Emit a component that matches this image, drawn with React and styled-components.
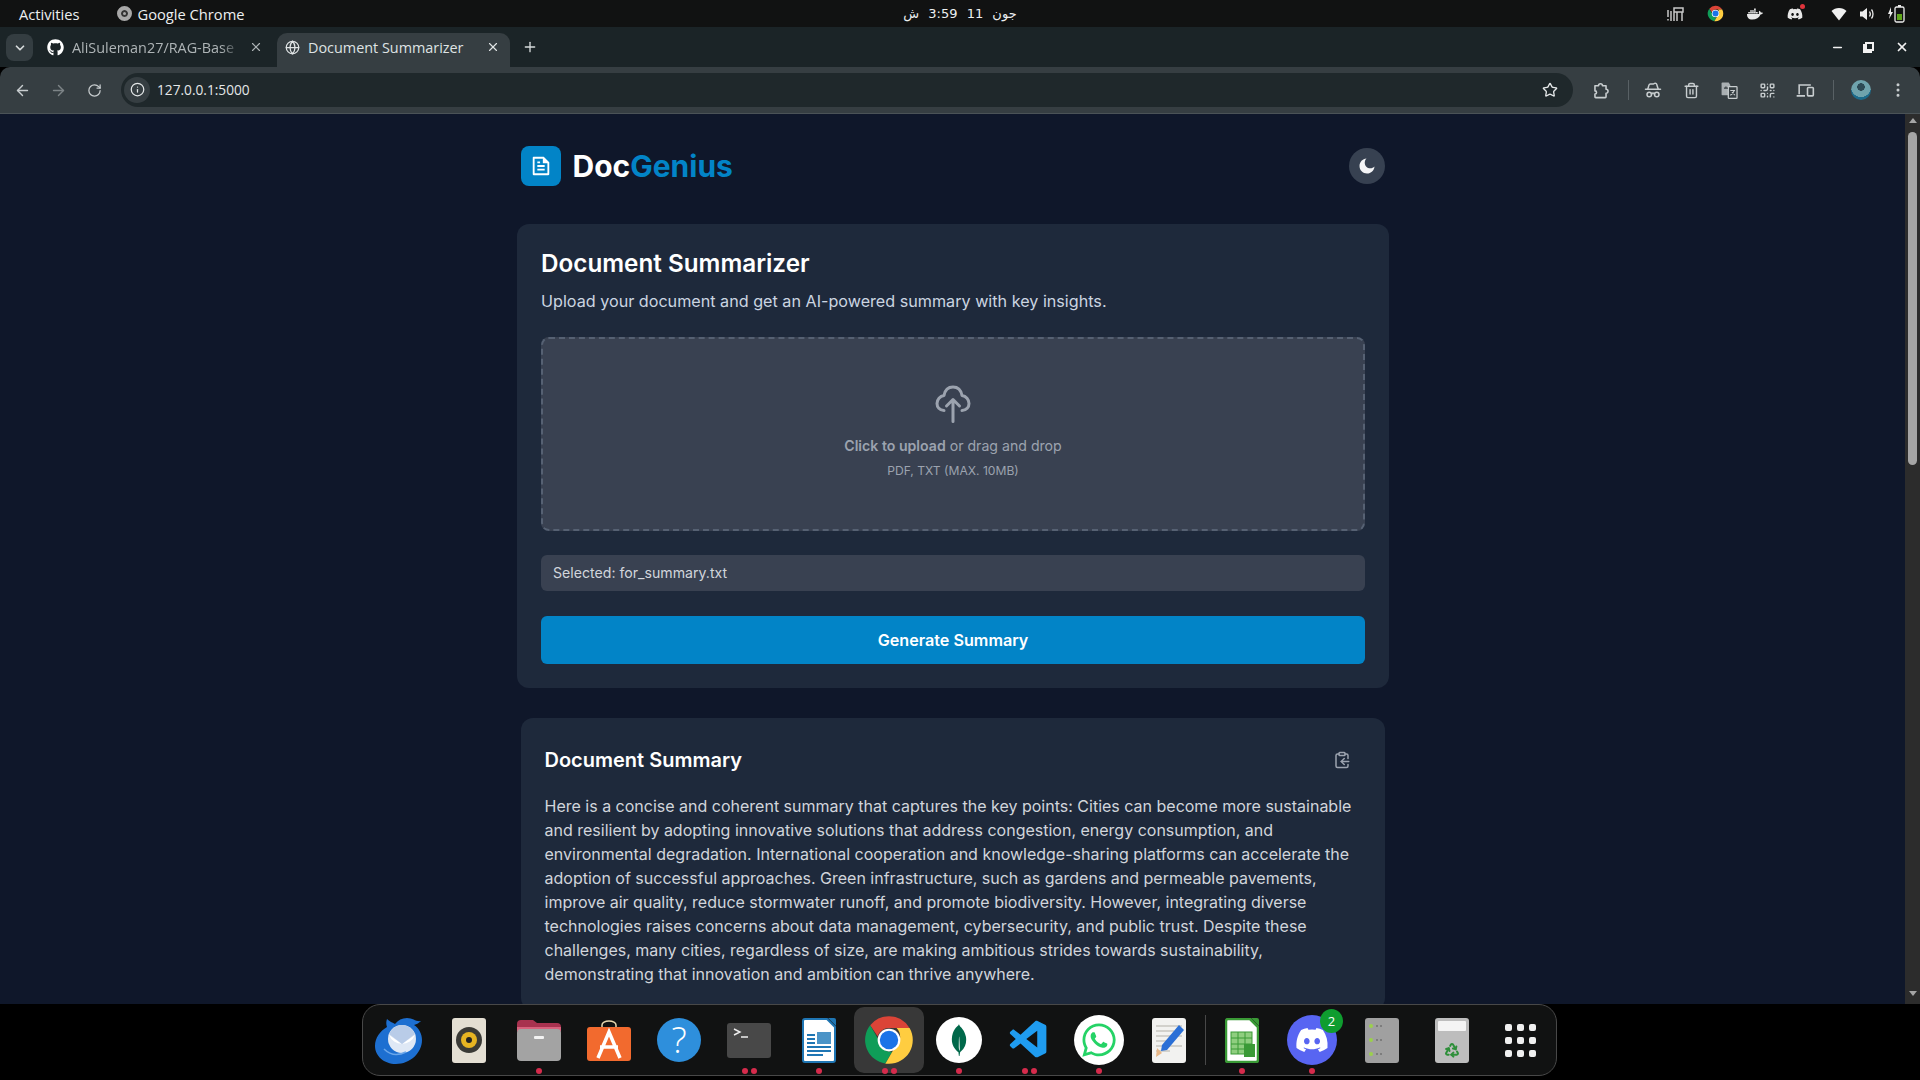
import React from 'react';
import styled, {createGlobalStyle} from 'styled-components';
import {ArrowLeft, ArrowRight, RotateCw, Info, Star, Trash2, QrCode, EllipsisVertical, ChevronDown, Plus, X, Minus, Globe, ClipboardCopy, Recycle, HatGlasses} from 'lucide-react';
import {FaGithub, FaDiscord, FaWhatsapp, FaDocker} from 'react-icons/fa';
import {SiMongodb} from 'react-icons/si';
import {VscVscode} from 'react-icons/vsc';
import {RiFileTextLine, RiMoonFill} from 'react-icons/ri';

const GlobalStyle = createGlobalStyle`
    html, body {
        margin: 0;
        padding: 0;
        height: 100%;
        overflow: hidden;
        background: #000;
    }
    * { box-sizing: border-box; }
`;

const ChromeLogo = ({size = 20}) => (
    <svg width={size} height={size} viewBox="0 0 48 48">
        <path fill="#db4437" d="M24 2a22 22 0 0 1 19 11H24a11 11 0 0 0-10.500 7.500L6.600 10.400A22 22 0 0 1 24 2z" />
        <path fill="#0f9d58" d="M6.600 10.400l9.600 16.600A9 9 0 0 0 27 34.600L20.600 45.700A22 22 0 0 1 6.600 10.400z" />
        <path fill="#ffcd40" d="M43 13a22 22 0 0 1-19 33h-3.400l9.600-16.600A11 11 0 0 0 31 13z" />
        <circle cx="24" cy="24" r="10.500" fill="#fff" />
        <circle cx="24" cy="24" r="8.500" fill="#1a73e8" />
    </svg>
);

const UploadCloud = () => (
    <svg width="36" height="38" viewBox="0 0 36 38" fill="none" stroke="currentColor" strokeWidth="3" strokeLinecap="round" strokeLinejoin="round">
        <path d="M9 25.500C4.500 25.500 2 22 2 18.500 2 14.500 5 11 9 10.500 10 5 13.500 2 18 2s8 3 9 8.500c4 .5 7 4 7 8 0 3.500-2.500 7-7 7" />
        <path d="M18 36.500V15M11.500 21l6.500-6.500 6.500 6.500" />
    </svg>
);

const ExtensionIcon = () => (
    <svg width="19" height="19" viewBox="0 0 24 24" fill="none" stroke="currentColor" strokeWidth="2" strokeLinejoin="round">
        <path d="M5 6h4.500a2.500 2.500 0 0 1 5 0H19v4.500a2.500 2.500 0 0 1 0 5V20a1 1 0 0 1-1 1H6a1 1 0 0 1-1-1v-3.500a2 2 0 0 0 0-4z" />
    </svg>
);

const TranslateIcon = () => (
    <svg width="19" height="19" viewBox="0 0 24 24">
        <path fill="#a9afb2" d="M2 3a1 1 0 0 1 1-1h8l2 3v13H3a1 1 0 0 1-1-1z" />
        <rect x="10.500" y="7" width="11" height="15" rx="1" fill="#363e42" stroke="#c8cdcf" strokeWidth="1.600" />
        <path stroke="#363e42" strokeWidth="1.500" fill="none" d="M5 9h5M7.500 7v2" />
        <path stroke="#c8cdcf" strokeWidth="1.300" fill="none" d="M13 12h6M18 12c-1 3-3 5-5 6M15 14l4 4" />
    </svg>
);

const DevicesIcon = () => (
    <svg width="20" height="20" viewBox="0 0 24 24" fill="none" stroke="currentColor" strokeWidth="1.900">
        <path d="M5 17V6h14M2 19h10" />
        <rect x="15" y="9" width="7" height="10" rx="1" />
    </svg>
);

const TrayBarsIcon = () => (
    <svg width="17" height="16" viewBox="0 0 17 16" fill="none" stroke="#c8c8c8" strokeWidth="1.500">
        <path d="M1 4v7M1 13v1.500M4 5v10M7 4v11M7 4V2h9v4H7M10 6v9M15 6v9" />
    </svg>
);

const WifiIcon = () => (
    <svg width="16" height="14" viewBox="0 0 16 14">
        <path fill="#f0f0f0" d="M8 13.500L.500 4C2.500 2 5 1 8 1s5.500 1 7.500 3z" />
    </svg>
);

const VolumeIcon = () => (
    <svg width="16" height="16" viewBox="0 0 16 16" fill="none">
        <path fill="#ececec" d="M1 5.500h2.500L8 2v12l-4.500-3.500H1z" />
        <path stroke="#ececec" strokeWidth="1.300" d="M10.500 5.500c1 1.500 1 3.500 0 5M12.500 3.500c2 2.500 2 6.500 0 9" />
    </svg>
);

const BatteryIcon = () => (
    <svg width="18" height="19" viewBox="0 0 18 19" fill="none">
        <path fill="#ececec" d="M4 3L1 10h2l-1 5 4-7H4z" />
        <rect x="8" y="3" width="9" height="15" rx="1.500" stroke="#ececec" strokeWidth="1.300" />
        <rect x="11" y="1" width="3" height="2" fill="#ececec" />
        <rect x="10" y="10" width="5" height="6" fill="#5fa61a" />
    </svg>
);

const Screen = styled.div`
    width: 1920px;
    height: 1080px;
    display: flex;
    flex-direction: column;
    overflow: hidden;
    background: #000;
`;

/* gnome top bar */
const TopBar = styled.div`
    height: 27px;
    flex: none;
    background: #111212;
    color: #eceff0;
    font: 14.700px "Open Sans", "Noto Sans", sans-serif;
    display: grid;
    grid-template-columns: 1fr auto 1fr;
    align-items: center;
    padding: 0 9px;
`;

const TopLeft = styled.div`
    display: flex;
    align-items: center;
    gap: 37px;
    padding-left: 10px;
`;

const AppName = styled.span`
    display: flex;
    align-items: center;
    gap: 6px;
`;

const AppDot = styled.span`
    width: 15px;
    height: 15px;
    border-radius: 50%;
    background: #a8a8a8;
    border: 4px solid #a8a8a8;
    box-shadow: inset 0 0 0 2px #333;
`;

const Clock = styled.div`
    font: 13px "DejaVu Sans", sans-serif;
    word-spacing: 5px;
`;

const Tray = styled.div`
    display: flex;
    justify-content: flex-end;
    align-items: center;
`;

const TraySlot = styled.span`
    width: ${p => p.$w || 40}px;
    margin-left: ${p => p.$gap || 0}px;
    display: flex;
    justify-content: center;
    align-items: center;
    color: #e8e8e8;
    position: relative;
`;

const TrayAlert = styled.i`
    position: absolute;
    top: -2px;
    left: 25px;
    width: 5px;
    height: 5px;
    border-radius: 50%;
    background: #e0343c;
`;

/* browser */
const TabStrip = styled.div`
    height: 40px;
    flex: none;
    background: #1b2427;
    display: flex;
    align-items: flex-end;
    padding-left: 6px;
`;

const TabSearch = styled.div`
    width: 27px;
    height: 27px;
    border-radius: 8px;
    margin: 0 0 6px;
    background: #343d41;
    color: #d6dadb;
    display: flex;
    align-items: center;
    justify-content: center;
`;

const Tab = styled.div`
    width: ${p => p.$w}px;
    height: 34px;
    display: flex;
    align-items: center;
    padding: 0 ${p => (p.$active ? '10px 6px 8px' : '14px 6px 14px')};
    gap: 8px;
    font: 14.400px "Open Sans", "Noto Sans", sans-serif;
    color: ${p => (p.$active ? '#dfe3e4' : '#aeb4b6')};
    background: ${p => (p.$active ? '#363e42' : 'transparent')};
    border-radius: 10px 10px 0 0;
    white-space: nowrap;
`;

const TabTitle = styled.span`
    flex: 1;
    ${p => p.$fade && 'mask-image: linear-gradient(90deg, #000 88%, transparent);'}
`;

const NewTab = styled.div`
    margin: 0 0 12px 12px;
    color: #d6dadb;
    display: flex;
`;

const WindowBtns = styled.div`
    margin-left: auto;
    display: flex;
    align-items: center;
    gap: 21px;
    padding: 0 11px 0 0;
    color: #f2f2f2;
    height: 100%;
`;

const RestoreIcon = styled.span`
    width: 9px;
    height: 9px;
    border: 2px solid #f2f2f2;
    box-shadow: -2px 2px 0 0 #f2f2f2;
    margin-top: -2px;
`;

const Toolbar = styled.div`
    height: 47px;
    flex: none;
    background: #363e42;
    border-radius: 10px 10px 0 0;
    display: flex;
    align-items: center;
    color: #c8cdcf;
    border-bottom: 1px solid #4b5357;
    padding-left: 4px;
`;

const NavBtn = styled.div`
    width: 36px;
    display: flex;
    justify-content: center;
    color: ${p => (p.$dim ? '#7d8487' : '#c8cdcf')};
    flex: none;
`;

const Omnibox = styled.div`
    width: 1452px;
    height: 34px;
    margin: 0 8px 0 9px;
    border-radius: 17px;
    background: #1f282b;
    display: flex;
    align-items: center;
    padding: 0 15px 1px 3px;
    font: 13.700px "Open Sans", "Noto Sans", sans-serif;
    color: #e4e7e8;
    flex: none;
`;

const InfoChip = styled.span`
    width: 26px;
    height: 26px;
    border-radius: 50%;
    background: #363e42;
    display: flex;
    align-items: center;
    justify-content: center;
    margin-right: 7px;
`;

const StarSlot = styled.span`
    margin-left: auto;
    display: flex;
`;

const ToolSep = styled.span`
    width: 1px;
    height: 20px;
    background: #596165;
    margin: 0 ${p => p.$right}px 0 9px;
    flex: none;
`;

const ToolIcon = styled.span`
    width: 38px;
    display: flex;
    justify-content: center;
    flex: none;
`;

const Avatar = styled.span`
    width: 20px;
    height: 20px;
    margin-left: 2px;
    border-radius: 50%;
    background: radial-gradient(circle at 50% 35%, #2d4a55 0 22%, #6fa3ad 24% 60%, #1c6b8c 62%);
`;

/* page */
const Viewport = styled.div`
    height: 890px;
    flex: none;
    display: flex;
    overflow: hidden;
`;

const Page = styled.main`
    flex: 1;
    background: #0f172a;
    font-family: Inter, sans-serif;
    overflow: hidden;
`;

const Container = styled.div`
    width: 864px;
    margin: 0 auto;
    padding-top: 32px;
`;

const Header = styled.header`
    display: flex;
    align-items: center;
    justify-content: space-between;
    height: 40px;
    margin-bottom: 38px;
`;

const Brand = styled.div`
    display: flex;
    align-items: center;
    gap: 12px;
`;

const LogoBox = styled.div`
    width: 40px;
    height: 40px;
    border-radius: 8px;
    background: #0284c7;
    color: #fff;
    display: flex;
    align-items: center;
    justify-content: center;
`;

const BrandName = styled.h1`
    margin: 0;
    font-size: 30px;
    font-weight: 700;
    line-height: 36px;
    color: #fff;
    span { color: #0284c7; }
`;

const ThemeToggle = styled.button`
    width: 36px;
    height: 36px;
    border: 0;
    border-radius: 50%;
    background: #374151;
    color: #f3f4f6;
    display: flex;
    align-items: center;
    justify-content: center;
    padding: 0;
`;

const UploadCard = styled.section`
    width: 872px;
    margin: 0 -3.500px;
    padding: 24px;
    height: 464px;
    background: #1e293b;
    border-radius: 12px;
`;

const CardTitle = styled.h2`
    margin: 0;
    font-size: 24.250px;
    line-height: 32px;
    font-weight: 600;
    color: #fff;
`;

const CardLead = styled.p`
    margin: 9px 0 24px;
    font-size: 16.160px;
    line-height: 24px;
    color: #cbd5e1;
`;

const DropZone = styled.div`
    height: 194px;
    padding-bottom: 4px;
    border: 2px dashed #566173;
    border-radius: 8px;
    background: #394151;
    display: flex;
    flex-direction: column;
    align-items: center;
    justify-content: center;
    color: #9ca3af;
`;

const DropHint = styled.p`
    margin: 13px 0 0;
    font-size: 14.140px;
    line-height: 20px;
    strong { font-weight: 600; }
`;

const DropNote = styled.p`
    margin: 7px 0 0;
    font-size: 12.120px;
    line-height: 16px;
`;

const Selected = styled.div`
    margin-top: 24px;
    height: 36px;
    padding: 0 12px 1px;
    border-radius: 6px;
    background: #394151;
    color: #d1d5db;
    font-size: 14.140px;
    display: flex;
    align-items: center;
`;

const GenerateBtn = styled.button`
    display: block;
    width: 100%;
    height: 48px;
    margin-top: 25px;
    border: 0;
    border-radius: 6px;
    background: #0284c7;
    color: #fff;
    font: 600 16.160px Inter, sans-serif;
`;

const SummaryCard = styled.section`
    margin-top: 30px;
    padding: 24px;
    background: #1e293b;
    border-radius: 12px;
`;

const SummaryHead = styled.div`
    display: flex;
    align-items: center;
    justify-content: space-between;
    height: 36px;
    margin-bottom: 16px;
`;

const SummaryTitle = styled.h3`
    margin: 0;
    font-size: 20px;
    font-weight: 600;
    color: #fff;
`;

const CopyBtn = styled.span`
    color: #9ca3af;
    display: flex;
    margin-right: 10px;
`;

const SummaryText = styled.p`
    margin: 0;
    font-size: 16px;
    line-height: 24px;
    color: #d1d5db;
`;

const ScrollTrack = styled.div`
    width: 15px;
    flex: none;
    background: #2c2c2c;
    display: flex;
    flex-direction: column;
    align-items: center;
    padding-top: 4px;
`;

const ScrollArrow = styled.span`
    width: 0;
    height: 0;
    border-left: 4px solid transparent;
    border-right: 4px solid transparent;
    border-${p => (p.$down ? 'top' : 'bottom')}: 5px solid #a5a5a5;
    ${p => p.$down && 'margin-top: auto; margin-bottom: 8px;'}
`;

const ScrollThumb = styled.span`
    width: 9px;
    height: 333px;
    margin-top: 9px;
    border-radius: 5px;
    background: #a5a5a5;
`;

/* dock */
const DockBar = styled.div`
    flex: 1;
    background: #000;
    padding-left: 362px;
`;

const Dock = styled.nav`
    width: 1195px;
    height: 72px;
    background: #111212;
    border: 1px solid #484848;
    border-radius: 18px;
    display: flex;
    align-items: center;
    padding: 0 1px;
`;

const DockItem = styled.div`
    width: 70px;
    height: 66px;
    flex: none;
    border-radius: 10px;
    position: relative;
    display: flex;
    align-items: center;
    justify-content: center;
    background: ${p => (p.$active ? '#383838' : 'transparent')};
`;

const Dots = styled.span`
    position: absolute;
    left: 0;
    right: 0;
    bottom: -1px;
    display: flex;
    justify-content: center;
    gap: 3px;
    i {
        width: 6px;
        height: 6px;
        border-radius: 50%;
        background: #d62b4c;
    }
`;

const DockSep = styled.span`
    width: 1px;
    height: 50px;
    margin: 0 1px;
    background: #484848;
    flex: none;
`;

const RoundIcon = styled.span`
    width: ${p => p.$size || 50}px;
    height: ${p => p.$size || 50}px;
    border-radius: 50%;
    background: ${p => p.$bg};
    color: ${p => p.$fg || '#fff'};
    display: flex;
    align-items: center;
    justify-content: center;
`;

const HelpMark = styled.span`
    font: 300 36px "Open Sans", sans-serif;
    line-height: 1;
`;

const CountBadge = styled.span`
    position: absolute;
    top: 2px;
    right: 4px;
    width: 23px;
    height: 24px;
    border-radius: 50%;
    background: #0f9d2f;
    color: #fff;
    font: 13px "Open Sans", sans-serif;
    display: flex;
    align-items: center;
    justify-content: center;
`;

const AppsGrid = styled.span`
    display: grid;
    grid-template-columns: repeat(3, 7px);
    gap: 6px 5px;
    margin-right: 4px;
    i {
        width: 7px;
        height: 7px;
        border-radius: 2px;
        background: #f0f0f0;
    }
`;

const Thunderbird = () => (
    <svg width="50" height="50" viewBox="0 0 50 50">
        <path fill="#1d6fd1" d="M13 4c-1 3-1 5 0 8C6 16 1 23 1 31c0 10 9 18 21 18 14 0 26-11 26-24 0-6-3-12-8-15 3-1 5-2 7-4-5 1-8-3-14-3-5 0-9 2-12 6-2-1-6-3-8-5z" />
        <circle cx="28" cy="24" r="14" fill="#dfe8f5" />
        <path fill="#fff" d="M15 20l13 9 13-9a14 14 0 0 1-26 0z" />
        <path fill="#b9cce8" d="M15 19c3-6 8-9 13-9s10 3 13 9l-13 10z" />
        <path fill="none" stroke="#6aa6ea" strokeWidth="1.500" d="M10 34c6 6 14 7 22 3" />
    </svg>
);

const Speaker = () => (
    <svg width="34" height="45" viewBox="0 0 34 45">
        <rect width="34" height="45" rx="3" fill="#e4dfd3" />
        <circle cx="17" cy="22" r="13" fill="#3a3a36" />
        <circle cx="17" cy="22" r="8" fill="#e6b422" />
        <circle cx="17" cy="22" r="3" fill="#222" />
    </svg>
);

const Folder = () => (
    <svg width="44" height="41" viewBox="0 0 44 41">
        <path fill="#a8324f" d="M0 4a4 4 0 0 1 4-4h12l4 3h20a4 4 0 0 1 4 4v10H0z" />
        <path fill="#d8627d" d="M0 7h44v4H0z" />
        <rect y="9" width="44" height="32" rx="4" fill="#a3a3a3" />
        <rect x="17" y="16" width="10" height="3" rx="1" fill="#f2f2f2" />
    </svg>
);

const Store = () => (
    <svg width="44" height="41" viewBox="0 0 44 41">
        <path fill="none" stroke="#e9d9b0" strokeWidth="1.500" d="M15 8V5a7 4 0 0 1 14 0v3" />
        <rect y="7" width="44" height="34" rx="3" fill="#f26a2e" />
        <path fill="none" stroke="#fff" strokeWidth="3.500" d="M11 38L22 12l11 26M13 27h18" />
    </svg>
);

const Terminal = () => (
    <svg width="44" height="35" viewBox="0 0 44 35">
        <rect width="44" height="35" rx="3" fill="#484848" />
        <path fill="none" stroke="#eee" strokeWidth="1.400" d="M7 6l6 3-6 3M14 14h7" />
    </svg>
);

const Writer = () => (
    <svg width="34" height="45" viewBox="0 0 34 45">
        <path fill="#fff" stroke="#1f76b4" strokeWidth="2" d="M1 3a2 2 0 0 1 2-2h22l8 8v33a2 2 0 0 1-2 2H3a2 2 0 0 1-2-2z" />
        <path fill="#1f76b4" d="M26 0l8 8V2a2 2 0 0 0-2-2z" />
        <path stroke="#1f76b4" strokeWidth="1.800" d="M5 17h8M5 21h8M5 25h8M5 29h24M5 33h24M5 37h16" />
        <rect x="15" y="14" width="14" height="12" fill="#4b94c7" />
    </svg>
);

const Gedit = () => (
    <svg width="34" height="45" viewBox="0 0 34 45">
        <rect width="34" height="45" rx="3" fill="#f2f2f0" />
        <path stroke="#c8c6c0" strokeWidth="1.600" d="M4 8h26M4 13h18M4 18h26M4 23h18M4 28h26M4 33h14" />
        <path fill="#2a6fd6" d="M27 7l5 5-17 20-6 1 1-6z" />
        <path fill="#e7b788" d="M5 30l5 5-6 4z" />
    </svg>
);

const Calc = () => (
    <svg width="34" height="45" viewBox="0 0 34 45">
        <path fill="#fff" stroke="#3a9a36" strokeWidth="2.500" d="M1 3a2 2 0 0 1 2-2h22l8 8v33a2 2 0 0 1-2 2H3a2 2 0 0 1-2-2z" />
        <path fill="#3a9a36" d="M26 0l8 8V2a2 2 0 0 0-2-2z" />
        <rect x="6" y="14" width="21" height="22" fill="#8fce7f" stroke="#3a9a36" />
        <path stroke="#3a9a36" d="M6 20h21M6 26h21M6 31h21M13 14v22M20 14v22" />
        <rect x="19" y="26" width="11" height="13" fill="#3a9a36" />
    </svg>
);

const ServerBox = () => (
    <svg width="34" height="45" viewBox="0 0 34 45">
        <rect width="34" height="45" rx="3" fill="#a0a0a0" />
        <circle cx="6" cy="8" r="2" fill="#9bd04c" />
        <circle cx="6" cy="22" r="2" fill="#9bd04c" />
        <circle cx="6" cy="36" r="2" fill="#9bd04c" />
        <path stroke="#7d7d7d" strokeWidth="2" strokeDasharray="2 2" d="M11 8h7M11 22h7M11 36h7" />
    </svg>
);

const TrashBin = styled.span`
    width: 34px;
    height: 45px;
    border-radius: 3px;
    background: #bdbdbd;
    padding: 3px;
    display: flex;
    flex-direction: column;
    align-items: center;
    color: #2e8f3a;
`;

const TrashLid = styled.span`
    width: 100%;
    height: 10px;
    border-radius: 1px;
    margin-bottom: 11px;
    background: #f4f4f4;
`;

const dockApps = [
    {key: 'bird', icon: <Thunderbird />},
    {key: 'music', icon: <Speaker />},
    {key: 'files', icon: <Folder />, dots: 1},
    {key: 'store', icon: <Store />},
    {key: 'help', icon: <RoundIcon $bg="#2e8fdc" $size={44}><HelpMark>?</HelpMark></RoundIcon>},
    {key: 'term', icon: <Terminal />, dots: 2},
    {key: 'writer', icon: <Writer />, dots: 1},
    {key: 'chrome', icon: <ChromeLogo size={52} />, dots: 2, active: true},
    {key: 'mongo', icon: <RoundIcon $bg="#fff" $fg="#00684a" $size={46}><SiMongodb size={32} /></RoundIcon>, dots: 1},
    {key: 'code', icon: <VscVscode size={45} color="#1f9cf0" />, dots: 2},
    {key: 'wa', icon: <RoundIcon $bg="#fff" $fg="#25d366"><FaWhatsapp size={38} /></RoundIcon>, dots: 1},
    {key: 'gedit', icon: <Gedit />},
    {key: 'sep'},
    {key: 'calc', icon: <Calc />, dots: 1},
    {key: 'discord', icon: <RoundIcon $bg="#5865f2"><FaDiscord size={34} /></RoundIcon>, dots: 1, badge: 2},
    {key: 'server', icon: <ServerBox />},
    {key: 'trash', icon: <TrashBin><TrashLid /><Recycle size={16} strokeWidth={3} /></TrashBin>},
    {key: 'apps', icon: <AppsGrid>{Array.from({length: 9}, (_, i) => <i key={i} />)}</AppsGrid>},
];

const summary = 'Here is a concise and coherent summary that captures the key points: Cities can become more sustainable and resilient by adopting innovative solutions that address congestion, energy consumption, and environmental degradation. International cooperation and knowledge-sharing platforms can accelerate the adoption of successful approaches. Green infrastructure, such as gardens and permeable pavements, improve air quality, reduce stormwater runoff, and promote biodiversity. However, integrating diverse technologies raises concerns about data management, cybersecurity, and public trust. Despite these challenges, many cities, regardless of size, are making ambitious strides towards sustainability, demonstrating that innovation and ambition can thrive anywhere.';

const App = () => (
    <Screen>
        <GlobalStyle />
        <TopBar>
            <TopLeft>
                <span>Activities</span>
                <AppName><AppDot />Google Chrome</AppName>
            </TopLeft>
            <Clock dir="rtl">جون 11 3:59 ش</Clock>
            <Tray>
                <TraySlot><TrayBarsIcon /></TraySlot>
                <TraySlot><ChromeLogo size={17} /></TraySlot>
                <TraySlot><FaDocker size={16} /></TraySlot>
                <TraySlot><FaDiscord size={16} /><TrayAlert /></TraySlot>
                <TraySlot $w={28} $gap={10}><WifiIcon /></TraySlot>
                <TraySlot $w={28}><VolumeIcon /></TraySlot>
                <TraySlot $w={30}><BatteryIcon /></TraySlot>
            </Tray>
        </TopBar>
        <TabStrip>
            <TabSearch><ChevronDown size={14} strokeWidth={3} /></TabSearch>
            <Tab $w={244}>
                <FaGithub size={17} color="#fff" />
                <TabTitle $fade>AliSuleman27/RAG-Base</TabTitle>
                <X size={14} />
            </Tab>
            <Tab $w={233} $active>
                <Globe size={15} />
                <TabTitle>Document Summarizer</TabTitle>
                <X size={14} />
            </Tab>
            <NewTab><Plus size={16} /></NewTab>
            <WindowBtns>
                <Minus size={13} strokeWidth={3} />
                <RestoreIcon />
                <X size={14} strokeWidth={3} />
            </WindowBtns>
        </TabStrip>
        <Toolbar>
            <NavBtn><ArrowLeft size={17} /></NavBtn>
            <NavBtn $dim><ArrowRight size={17} /></NavBtn>
            <NavBtn><RotateCw size={15} /></NavBtn>
            <Omnibox>
                <InfoChip><Info size={15} /></InfoChip>
                127.0.0.1:5000
                <StarSlot><Star size={16} /></StarSlot>
            </Omnibox>
            <ToolIcon><ExtensionIcon /></ToolIcon>
            <ToolSep $right={5} />
            <ToolIcon><HatGlasses size={18} /></ToolIcon>
            <ToolIcon><Trash2 size={17} /></ToolIcon>
            <ToolIcon><TranslateIcon /></ToolIcon>
            <ToolIcon><QrCode size={17} /></ToolIcon>
            <ToolIcon><DevicesIcon /></ToolIcon>
            <ToolSep $right={7} />
            <ToolIcon><Avatar /></ToolIcon>
            <ToolIcon><EllipsisVertical size={18} /></ToolIcon>
        </Toolbar>
        <Viewport>
            <Page>
                <Container>
                    <Header>
                        <Brand>
                            <LogoBox><RiFileTextLine size={22} /></LogoBox>
                            <BrandName>Doc<span>Genius</span></BrandName>
                        </Brand>
                        <ThemeToggle><RiMoonFill size={18} /></ThemeToggle>
                    </Header>
                    <UploadCard>
                        <CardTitle>Document Summarizer</CardTitle>
                        <CardLead>Upload your document and get an AI-powered summary with key insights.</CardLead>
                        <DropZone>
                            <UploadCloud />
                            <DropHint><strong>Click to upload</strong> or drag and drop</DropHint>
                            <DropNote>PDF, TXT (MAX. 10MB)</DropNote>
                        </DropZone>
                        <Selected>Selected: for_summary.txt</Selected>
                        <GenerateBtn>Generate Summary</GenerateBtn>
                    </UploadCard>
                    <SummaryCard>
                        <SummaryHead>
                            <SummaryTitle>Document Summary</SummaryTitle>
                            <CopyBtn><ClipboardCopy size={18} /></CopyBtn>
                        </SummaryHead>
                        <SummaryText>{summary}</SummaryText>
                    </SummaryCard>
                </Container>
            </Page>
            <ScrollTrack>
                <ScrollArrow />
                <ScrollThumb />
                <ScrollArrow $down />
            </ScrollTrack>
        </Viewport>
        <DockBar>
            <Dock>
                {dockApps.map(app => app.key === 'sep' ? <DockSep key="sep" /> : (
                    <DockItem key={app.key} $active={app.active}>
                        {app.icon}
                        {app.badge && <CountBadge>{app.badge}</CountBadge>}
                        {app.dots && <Dots>{Array.from({length: app.dots}, (_, i) => <i key={i} />)}</Dots>}
                    </DockItem>
                ))}
            </Dock>
        </DockBar>
    </Screen>
);

export default App;
